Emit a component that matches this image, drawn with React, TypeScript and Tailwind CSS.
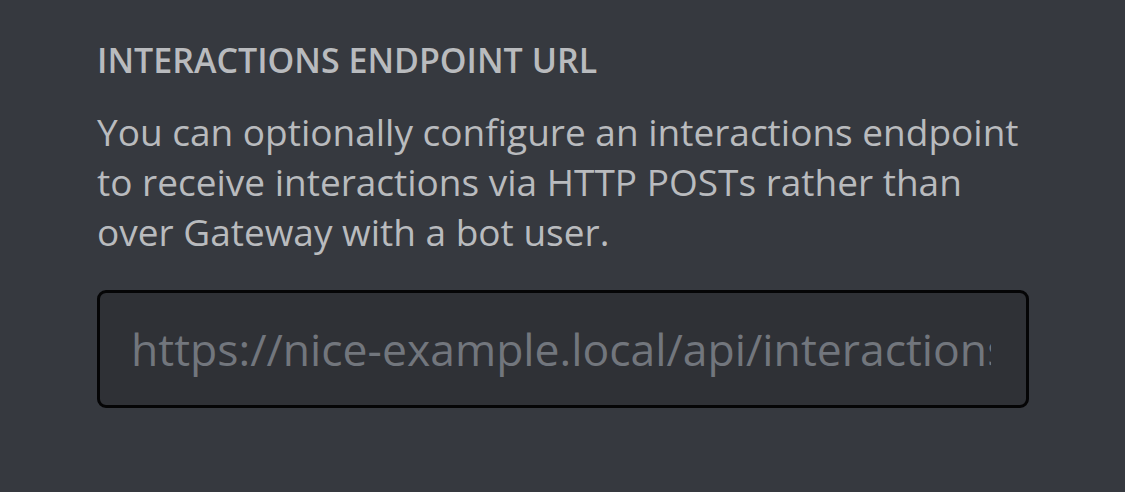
export default function App() {
  return (
    <div
      className="min-h-[492px] w-full bg-[#36393f] px-[97px] pt-[36px]"
      style={{ fontFamily: "'Open Sans', Lato, sans-serif" }}
    >
      <div className="w-[932px]">
        <h2 className="text-[34px] leading-[48px] font-semibold text-[#b9bbbe]">
          INTERACTIONS ENDPOINT URL
        </h2>
        <p className="mt-[23px] text-[37px] leading-[50px] text-[#b9bbbe]">
          You can optionally configure an interactions endpoint to receive interactions via HTTP POSTs rather than over Gateway with a bot user.
        </p>
        {/* input, placeholder shown as clipped text */}
        <div className="mt-[33px] h-[118px] rounded-[9px] border-[3px] border-[#050506] bg-[#2f3136] pl-[31px] pr-[35px] flex items-center">
          <div className="w-full overflow-hidden whitespace-nowrap text-[44.5px] leading-[60px] text-[#72767d]">
            https://nice-example.local/api/interactions
          </div>
        </div>
      </div>
    </div>
  );
}
